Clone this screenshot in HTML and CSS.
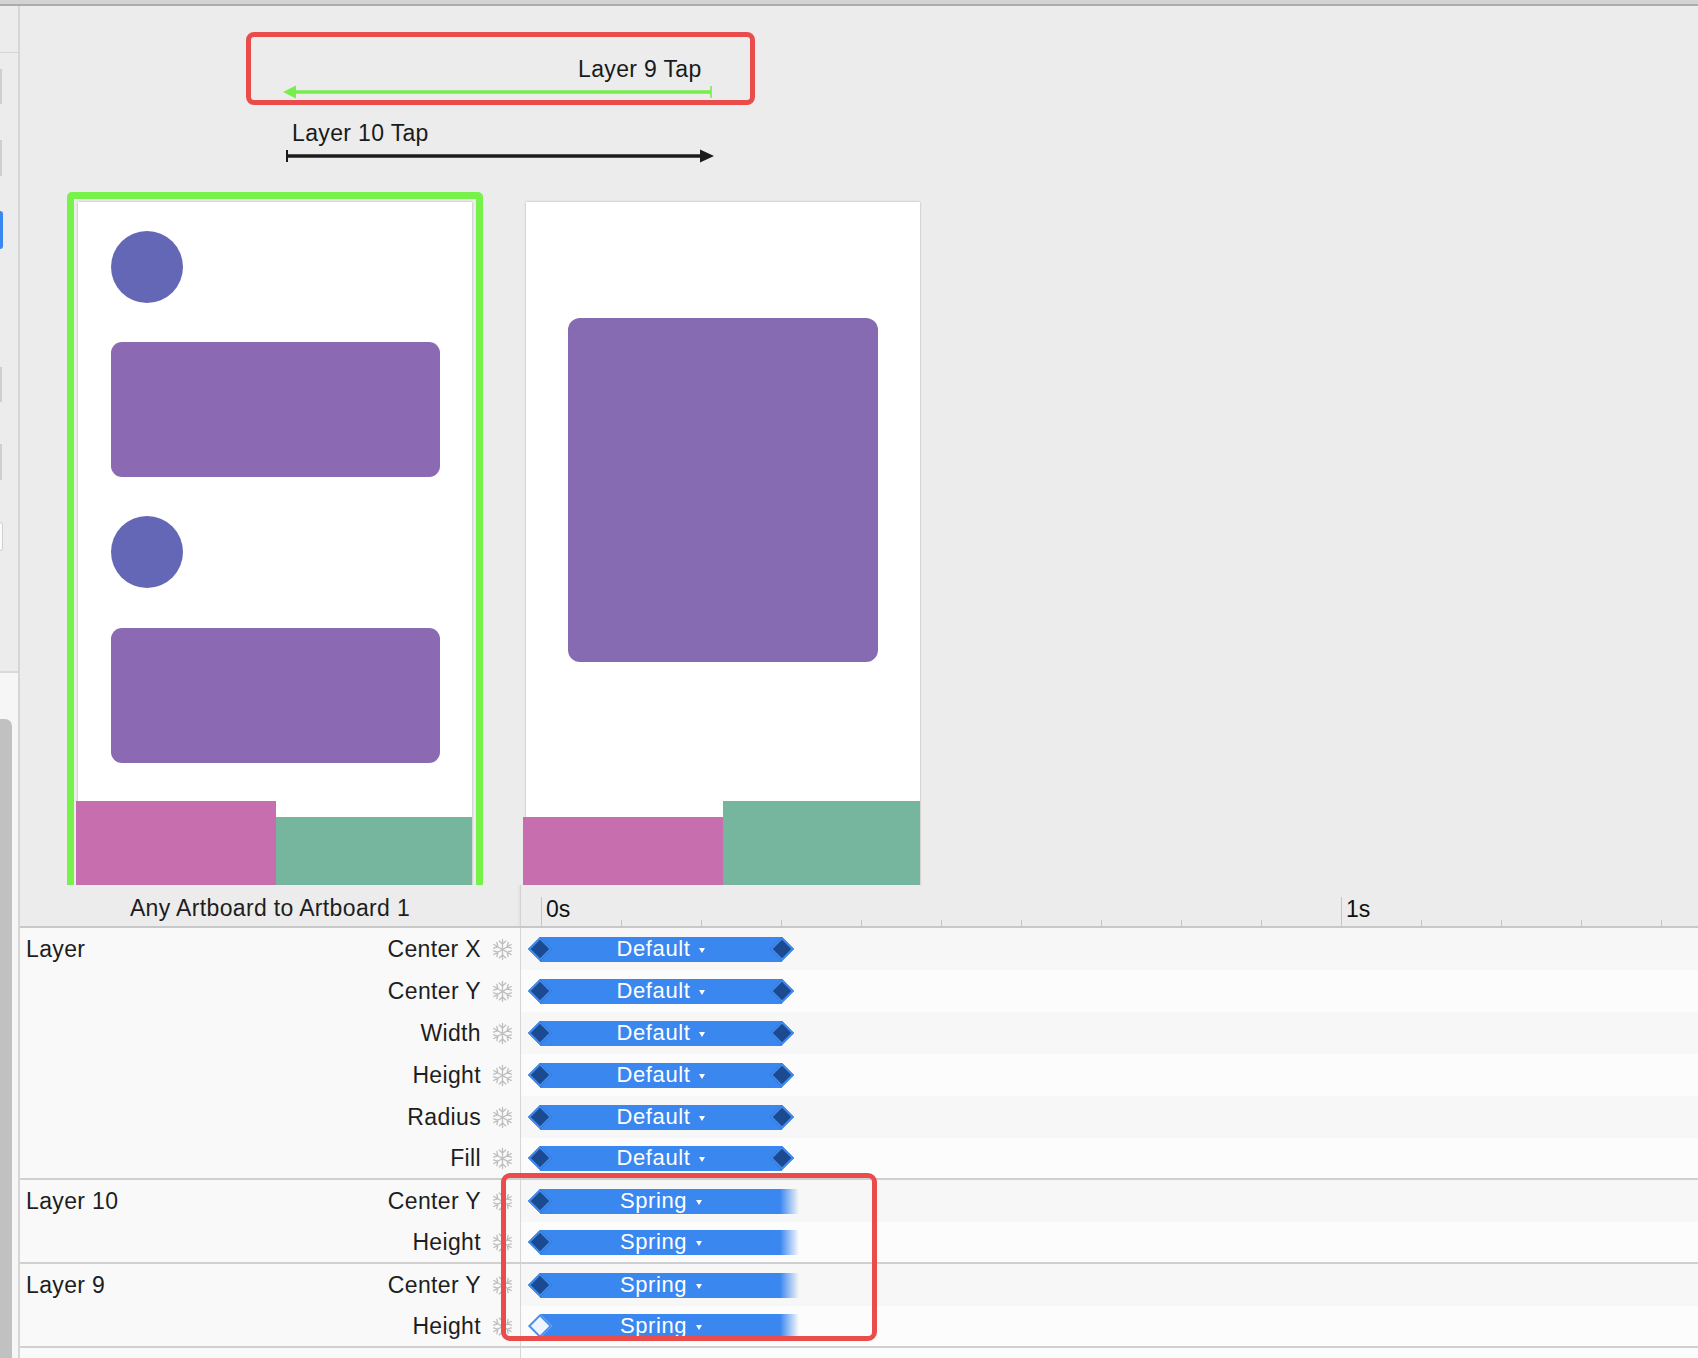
FILE: index.html
```html
<!DOCTYPE html>
<html>
<head>
<meta charset="utf-8">
<title>Transition timeline</title>
<link rel="stylesheet" href="styles.css">
</head>
<body>
<svg class="defs" width="0" height="0" aria-hidden="true">
  <symbol id="snow" viewBox="0 0 24 24">
    <g fill="none" stroke="currentColor" stroke-width="1.35" stroke-linecap="round">
      <g id="arm"><path d="M12 1.5V22.5M8.6 3.2L12 6.4 15.4 3.2M8.6 20.8L12 17.6 15.4 20.8"/></g>
      <use href="#arm" transform="rotate(60 12 12)"/>
      <use href="#arm" transform="rotate(120 12 12)"/>
    </g>
  </symbol>
</svg>
<div class="topbar"></div>
<div class="main">
  <aside class="sidebar">
    <div class="sb-top"></div>
    <span class="sb-ctl c1"></span>
    <span class="sb-ctl c2"></span>
    <span class="sb-ctl c3"></span>
    <span class="sb-ctl c4"></span>
    <span class="sb-ctl c5"></span>
    <span class="sb-ctl c6"></span>
    <div class="sb-panel"><div class="scrollbar"></div></div>
  </aside>

  <div class="content">
    <section class="canvas">
      <div class="callout callout-top"></div>
      <span class="anno-label label9">Layer 9 Tap</span>
      <svg class="arrow arrow-green" width="432" height="14" viewBox="0 0 432 14">
        <line x1="10" y1="7" x2="429" y2="7" stroke="#77ee4b" stroke-width="3.5"/>
        <polygon points="1,7 14,0.5 14,13.5" fill="#77ee4b"/>
        <line x1="429" y1="1" x2="429" y2="13" stroke="#77ee4b" stroke-width="1.6"/>
      </svg>
      <span class="anno-label label10">Layer 10 Tap</span>
      <svg class="arrow arrow-black" width="434" height="16" viewBox="0 0 434 16">
        <line x1="2" y1="8" x2="418" y2="8" stroke="#1b1b1b" stroke-width="3.5"/>
        <line x1="2" y1="2" x2="2" y2="14" stroke="#1b1b1b" stroke-width="2"/>
        <polygon points="415,1.5 429,8 415,14.5" fill="#1b1b1b"/>
      </svg>

      <div class="selection">
        <div class="artboard ab1">
          <span class="dot dot1"></span>
          <span class="card card1"></span>
          <span class="dot dot2"></span>
          <span class="card card2"></span>
          <span class="blk pink pink1"></span>
          <span class="blk teal teal1"></span>
        </div>
      </div>

      <div class="artboard ab2">
        <span class="card big"></span>
        <span class="blk pink pink2"></span>
        <span class="blk teal teal2"></span>
      </div>
    </section>

    <section class="timeline">
      <div class="tl-header">
        <div class="tl-title">Any Artboard to Artboard 1</div>
        <div class="ruler">
          <span class="sec">0s</span>
          <span class="sec">1s</span>
        </div>
      </div>

      <div class="group">
        <div class="row">
          <div class="lbl"><span class="grp">Layer</span><span class="prop">Center X</span><svg class="snow"><use href="#snow"/></svg></div>
          <div class="track"><div class="bar"><i class="dia"></i><span>Default</span><b class="caret"></b><i class="dia end"></i></div></div>
        </div>
        <div class="row">
          <div class="lbl"><span class="grp"></span><span class="prop">Center Y</span><svg class="snow"><use href="#snow"/></svg></div>
          <div class="track"><div class="bar"><i class="dia"></i><span>Default</span><b class="caret"></b><i class="dia end"></i></div></div>
        </div>
        <div class="row">
          <div class="lbl"><span class="grp"></span><span class="prop">Width</span><svg class="snow"><use href="#snow"/></svg></div>
          <div class="track"><div class="bar"><i class="dia"></i><span>Default</span><b class="caret"></b><i class="dia end"></i></div></div>
        </div>
        <div class="row">
          <div class="lbl"><span class="grp"></span><span class="prop">Height</span><svg class="snow"><use href="#snow"/></svg></div>
          <div class="track"><div class="bar"><i class="dia"></i><span>Default</span><b class="caret"></b><i class="dia end"></i></div></div>
        </div>
        <div class="row">
          <div class="lbl"><span class="grp"></span><span class="prop">Radius</span><svg class="snow"><use href="#snow"/></svg></div>
          <div class="track"><div class="bar"><i class="dia"></i><span>Default</span><b class="caret"></b><i class="dia end"></i></div></div>
        </div>
        <div class="row">
          <div class="lbl"><span class="grp"></span><span class="prop">Fill</span><svg class="snow"><use href="#snow"/></svg></div>
          <div class="track"><div class="bar"><i class="dia"></i><span>Default</span><b class="caret"></b><i class="dia end"></i></div></div>
        </div>
      </div>

      <div class="group">
        <div class="row">
          <div class="lbl"><span class="grp">Layer 10</span><span class="prop">Center Y</span><svg class="snow"><use href="#snow"/></svg></div>
          <div class="track"><div class="bar spring"><i class="dia"></i><span>Spring</span><b class="caret"></b></div></div>
        </div>
        <div class="row">
          <div class="lbl"><span class="grp"></span><span class="prop">Height</span><svg class="snow"><use href="#snow"/></svg></div>
          <div class="track"><div class="bar spring"><i class="dia"></i><span>Spring</span><b class="caret"></b></div></div>
        </div>
      </div>

      <div class="group">
        <div class="row">
          <div class="lbl"><span class="grp">Layer 9</span><span class="prop">Center Y</span><svg class="snow"><use href="#snow"/></svg></div>
          <div class="track"><div class="bar spring"><i class="dia"></i><span>Spring</span><b class="caret"></b></div></div>
        </div>
        <div class="row">
          <div class="lbl"><span class="grp"></span><span class="prop">Height</span><svg class="snow"><use href="#snow"/></svg></div>
          <div class="track"><div class="bar spring"><i class="dia hollow"></i><span>Spring</span><b class="caret"></b></div></div>
        </div>
      </div>

      <div class="row filler">
        <div class="lbl"></div>
        <div class="track"></div>
      </div>

      <div class="callout callout-bottom"></div>
    </section>
  </div>
</div>
</body>
</html>
```

FILE: styles.css
```css
* { box-sizing: border-box; }
html, body { margin: 0; padding: 0; }
body {
  width: 1698px;
  height: 1358px;
  overflow: hidden;
  background: #ececec;
  font-family: "Liberation Sans", Arial, sans-serif;
  color: #1e1e1e;
  display: flex;
  flex-direction: column;
}
.defs { position: absolute; width: 0; height: 0; }

.topbar {
  flex: none;
  height: 6px;
  background: #d4d2d4;
  border-bottom: 2px solid #acacac;
}
.main { flex: 1; display: flex; min-height: 0; }

/* ---------- left sidebar (cut off) ---------- */
.sidebar {
  flex: none;
  width: 20px;
  display: flex;
  flex-direction: column;
  background: #ececec;
  border-right: 2px solid #d6d6d6;
}
.sb-top { flex: none; height: 47px; border-bottom: 1px solid #d6d6d6; }
.sb-ctl { flex: none; display: block; width: 2px; background: #cfcfcf; }
.c1 { margin-top: 16px; height: 35px; }
.c2 { margin-top: 36px; height: 36px; }
.c3 { margin-top: 35px; height: 38px; width: 3px; background: #3b87f1; border-radius: 0 3px 3px 0; }
.c4 { margin-top: 118px; height: 35px; }
.c5 { margin-top: 42px; height: 36px; }
.c6 { margin-top: 42px; height: 29px; width: 3px; background: #fbfbfb; border: 1px solid #d0d0d0; border-left: 0; border-radius: 0 4px 4px 0; }
.sb-panel {
  flex: 1;
  margin-top: 120px;
  border-top: 2px solid #d9d9d9;
  background: #f6f6f6;
  padding-top: 46px;
  display: flex;
  flex-direction: column;
}
.scrollbar { flex: 1; width: 12px; background: #c1c1c1; border-radius: 0 7px 0 0; }

/* ---------- content ---------- */
.content { flex: 1; display: flex; flex-direction: column; min-width: 0; }

.canvas {
  flex: none;
  height: 879px;
  position: relative;
  overflow: hidden;
  background: #ececec;
}
.callout {
  position: absolute;
  border: 5px solid #ea4c4b;
  border-radius: 8px;
  pointer-events: none;
}
.callout-top { left: 226px; top: 26px; width: 509px; height: 73px; }
.anno-label {
  position: absolute;
  font-size: 23px;
  line-height: 27px;
  letter-spacing: 0.35px;
  color: #1a1a1a;
  white-space: nowrap;
}
.label9 { left: 558px; top: 50px; }
.label10 { left: 272px; top: 114px; }
.arrow { position: absolute; display: block; }
.arrow-green { left: 262px; top: 79px; }
.arrow-black { left: 265px; top: 142px; }

.selection {
  position: absolute;
  left: 47px;
  top: 186px;
  width: 416px;
  border: 7px solid #77f24b;
  border-radius: 5px;
  padding: 3px 4px 0;
}
.artboard {
  position: relative;
  width: 394px;
  height: 720px;
  background: #fff;
  box-shadow: 0 0 2px rgba(0, 0, 0, 0.28);
}
.ab2 { position: absolute; left: 506px; top: 196px; }

.dot { position: absolute; width: 72px; height: 72px; border-radius: 50%; background: #6467b5; left: 33px; }
.dot1 { top: 29px; }
.dot2 { top: 314px; }
.card { position: absolute; background: #8b69b3; border-radius: 11px; }
.card1 { left: 33px; top: 140px; width: 329px; height: 135px; }
.card2 { left: 33px; top: 426px; width: 329px; height: 135px; }
.big { left: 42px; top: 116px; width: 310px; height: 344px; background: #866bb2; border-radius: 12px; }
.blk { position: absolute; height: 140px; }
.pink { background: #c66eae; }
.teal { background: #76b69e; }
.pink1 { left: -2px; top: 599px; width: 200px; }
.teal1 { left: 198px; top: 615px; width: 196px; }
.pink2 { left: -3px; top: 615px; width: 200px; }
.teal2 { left: 197px; top: 599px; width: 197px; }

/* ---------- timeline ---------- */
.timeline {
  flex: 1;
  position: relative;
  background: #fafafa;
  overflow: hidden;
}
.tl-header {
  height: 43px;
  display: flex;
  background: #ececec;
  border-bottom: 2px solid #c8c8c8;
}
.tl-title {
  flex: none;
  width: 501px;
  border-right: 1px solid #d2d2d2;
  display: flex;
  align-items: center;
  justify-content: center;
  padding-top: 6px;
  font-size: 23px;
  letter-spacing: 0.35px;
  box-shadow: inset -3px 0 3px -2px rgba(0,0,0,0.06);
}
.ruler {
  flex: 1;
  display: flex;
  padding-left: 20px;
  background: repeating-linear-gradient(to right, #c4c4c4 0 1px, transparent 1px 80px) 20px 100% / 100% 6px no-repeat;
}
.sec {
  flex: none;
  width: 800px;
  margin-top: 12px;
  border-left: 1px solid #c6c6c6;
  padding-left: 4px;
  font-size: 23px;
  line-height: 24px;
  color: #111;
}

.group { border-bottom: 2px solid #d0d0d0; }
.group > .row:last-child { height: 40px; }
.row { display: flex; height: 42px; }
.lbl {
  flex: none;
  width: 501px;
  display: flex;
  align-items: center;
  padding: 0 6px;
  background: #f9f9f9;
  border-right: 1px solid #d6d6d6;
  font-size: 23px;
  letter-spacing: 0.35px;
  color: #1e1e1e;
  white-space: nowrap;
}
.grp { flex: 1; }
.snow { width: 23px; height: 23px; margin-left: 10px; color: #bdbdbd; flex: none; }
.track {
  flex: 1;
  display: flex;
  align-items: center;
  padding-left: 19px;
  background: #fcfcfc;
}
.group > .row:nth-child(odd) .track { background: #f7f7f7; }
.filler { height: 20px; }

.bar {
  position: relative;
  flex: none;
  width: 242px;
  height: 25px;
  background: #3a87f0;
  color: #fff;
  font-size: 22px;
  letter-spacing: 0.6px;
  display: flex;
  align-items: center;
  justify-content: center;
  gap: 9px;
}
.bar.spring {
  width: 259px;
  padding-right: 17px;
  background: linear-gradient(to right, #3a87f0 0, #3a87f0 240px, rgba(58, 135, 240, 0) 259px);
}
.caret {
  width: 0;
  height: 0;
  border-left: 3.5px solid transparent;
  border-right: 3.5px solid transparent;
  border-top: 5px solid #fff;
  margin-top: 3px;
}
.dia {
  position: absolute;
  left: 0;
  top: 50%;
  width: 17px;
  height: 17px;
  background: #1c4a91;
  border: 2px solid #3f8aee;
  transform: translate(-50%, -50%) rotate(45deg);
}
.dia.end { left: 100%; }
.dia.hollow { background: #eef5ff; border-color: #4a90ee; }

.callout-bottom { left: 481px; top: 288px; width: 376px; height: 168px; border-radius: 9px; }
```
